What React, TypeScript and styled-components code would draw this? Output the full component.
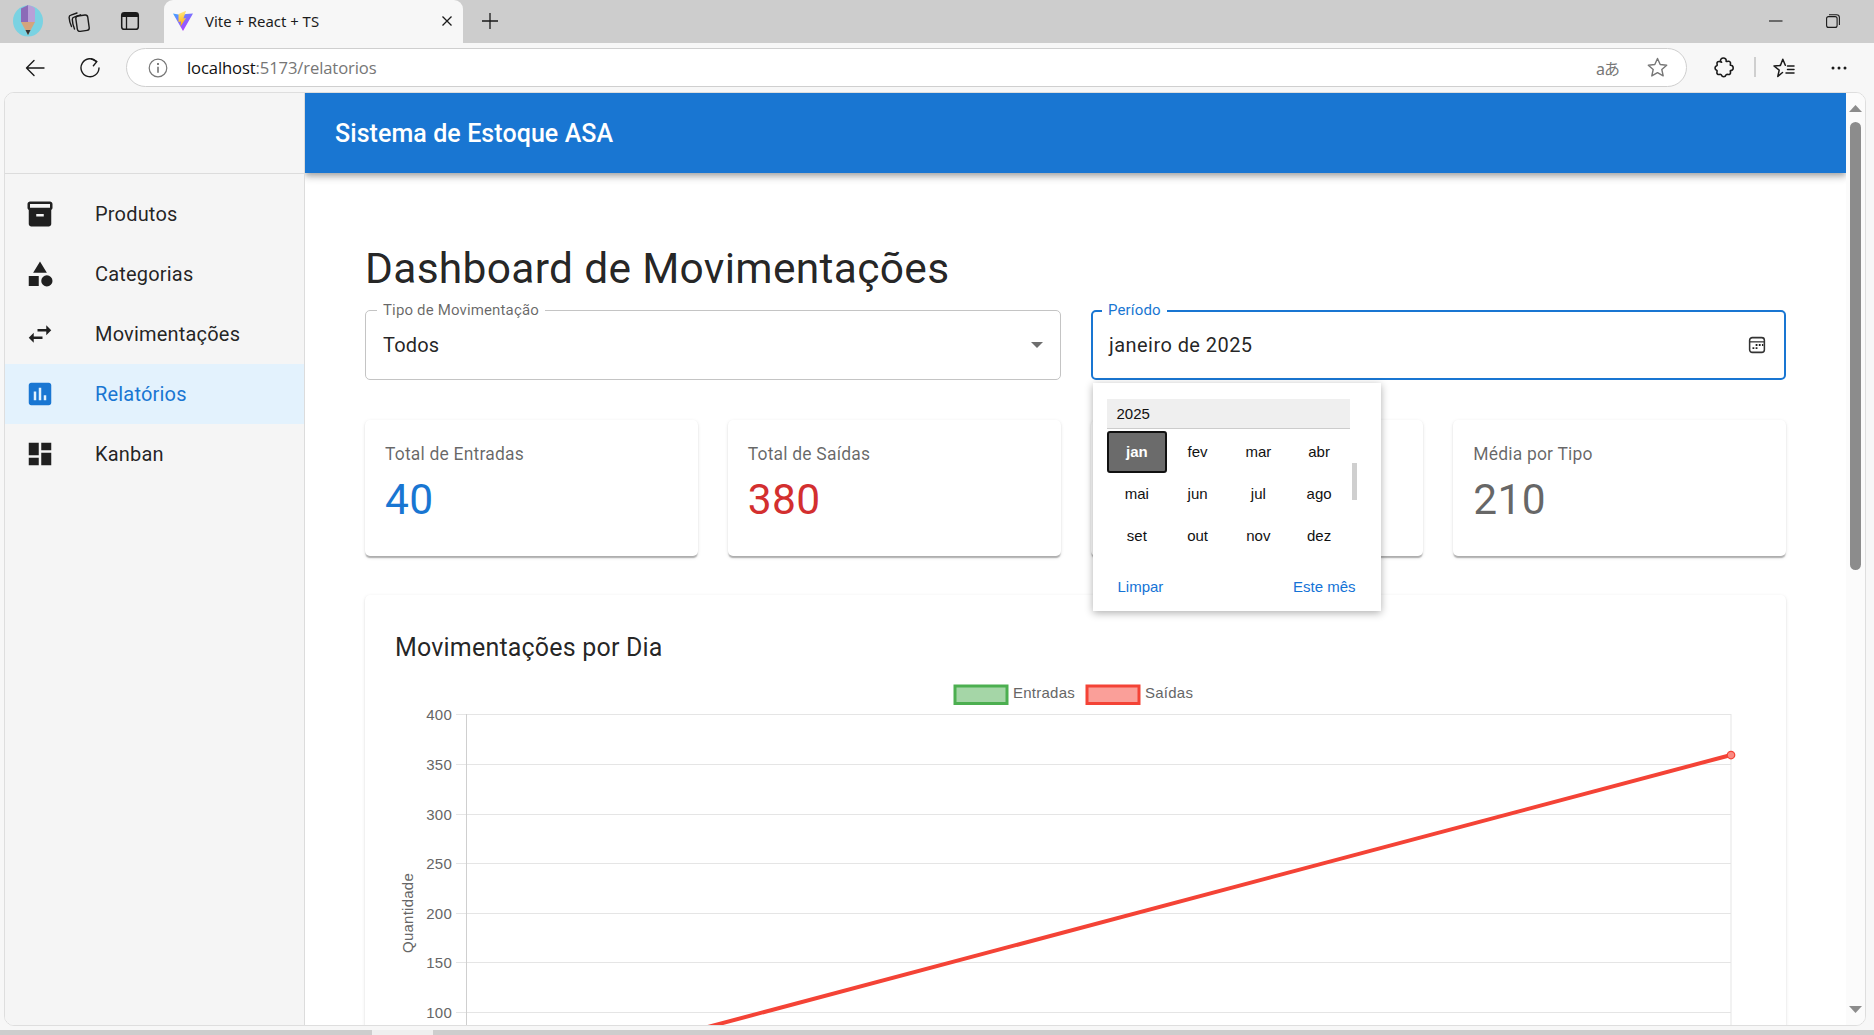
import React from "react";
import styled, { createGlobalStyle } from "styled-components";

const GlobalStyle = createGlobalStyle`
  html, body { margin: 0; padding: 0; width: 1874px; height: 1035px; overflow: hidden; background: #f7f7f7; }
  * { box-sizing: border-box; }
  #root { width: 1874px; height: 1035px; }
`;

const Page = styled.div`
  width: 1874px;
  height: 1035px;
  display: flex;
  flex-direction: column;
  background: #f7f7f7;
  overflow: hidden;
  font-family: Roboto, "Liberation Sans", sans-serif;
`;

/* ---------- browser chrome ---------- */
const TabStrip = styled.div`
  height: 43px;
  flex: none;
  background: #cdcdcd;
  display: flex;
  align-items: stretch;
  padding: 0 12px 0 3px;
`;
const StripSlot = styled.div<{ $w?: number }>`
  width: ${(p) => p.$w ?? 50}px;
  margin-right: 1px;
  padding-bottom: 2px;
  display: flex;
  align-items: center;
  justify-content: center;
  flex: none;
`;
const Tab = styled.div`
  width: 299px;
  margin-left: 8px;
  background: #f7f7f7;
  border-radius: 9px 9px 0 0;
  display: flex;
  align-items: center;
  padding: 0 10px 2px 9px;
  flex: none;
  position: relative;
`;
const TabTitle = styled.span`
  margin-left: 12px;
  flex: 1;
  font: 14.9px "Noto Sans", "Open Sans", sans-serif;
  color: #1c1c1c;
`;
const Spacer = styled.div`
  flex: 1;
`;
const ToolBar = styled.div`
  height: 49px;
  flex: none;
  display: flex;
  align-items: flex-start;
  padding: 5px 0 0 7px;
  background: #f7f7f7;
`;
const ToolSlot = styled.div<{ $w?: number }>`
  width: ${(p) => p.$w ?? 55}px;
  height: 39px;
  display: flex;
  align-items: center;
  justify-content: center;
  flex: none;
`;
const Address = styled.div`
  width: 1561px;
  height: 39px;
  margin: 0 10px 0 9px;
  flex: none;
  background: #fff;
  border: 1px solid #cfcfcf;
  border-radius: 20px;
  display: flex;
  align-items: center;
  padding: 0 18px 0 21px;
`;
const Url = styled.div`
  margin-left: 19px;
  flex: 1;
  font: 16.6px "Open Sans", "Noto Sans", sans-serif;
  letter-spacing: -0.11px;
  color: #767676;
`;
const UrlHost = styled.span`
  color: #111;
`;
const Translate = styled.span`
  margin-right: 28px;
  font: 16px "Noto Sans", "Noto Sans CJK JP", sans-serif;
  letter-spacing: -1px;
  color: #777;
`;
const ToolDivider = styled.div`
  width: 2px;
  height: 20px;
  margin: 9px 3px 0 3px;
  background: #cfcfcf;
  flex: none;
`;

/* ---------- app frame ---------- */
const Frame = styled.div`
  width: 1862px;
  height: 934px;
  margin-left: 4px;
  flex: none;
  display: flex;
  background: #fff;
  border: 1px solid #dedede;
  border-radius: 10px;
  overflow: hidden;
`;
const Sidebar = styled.aside`
  width: 300px;
  flex: none;
  background: #f5f5f5;
  border-right: 1px solid #dcdcdc;
`;
const SideTop = styled.div`
  height: 81px;
  border-bottom: 1px solid #dcdcdc;
`;
const NavList = styled.nav`
  padding-top: 10px;
  display: flex;
  flex-direction: column;
`;
const NavItem = styled.div<{ $active?: boolean }>`
  height: 60px;
  display: flex;
  align-items: center;
  padding-left: 20px;
  background: ${(p) => (p.$active ? "#e3f2fd" : "transparent")};
  color: ${(p) => (p.$active ? "#1976d2" : "rgba(0,0,0,0.87)")};
`;
const NavIcon = styled.svg`
  width: 30px;
  height: 30px;
  fill: currentColor;
  flex: none;
`;
const NavLabel = styled.span`
  margin-left: 40px;
  font-size: 20px;
  letter-spacing: 0.19px;
`;
const Main = styled.main`
  width: 1541px;
  flex: none;
  display: flex;
  flex-direction: column;
  overflow: hidden;
`;
const AppBar = styled.header`
  height: 80px;
  flex: none;
  background: #1976d2;
  display: flex;
  align-items: center;
  padding-left: 30px;
  color: #fff;
  font-size: 25px;
  font-weight: 500;
  letter-spacing: 0.08px;
  position: relative;
  z-index: 2;
  box-shadow: 0 2.5px 5px -1px rgba(0,0,0,.2), 0 5px 6px 0 rgba(0,0,0,.14), 0 1px 12px 0 rgba(0,0,0,.12);
`;
const Content = styled.div`
  flex: 1;
  padding: 70px 60px 0;
  overflow: hidden;
`;
const Title = styled.h1`
  margin: 0 0 14.5px;
  font-size: 42.5px;
  font-weight: 400;
  line-height: 1.235;
  letter-spacing: 0.31px;
  color: rgba(0,0,0,0.87);
`;
const Filters = styled.div`
  display: grid;
  grid-template-columns: 1fr 1fr;
  gap: 30px;
`;
const Field = styled.div<{ $focused?: boolean }>`
  position: relative;
  height: 70px;
  display: flex;
  align-items: center;
  justify-content: space-between;
  padding: 0 17px;
  border-radius: 5px;
  border: ${(p) => (p.$focused ? "2.5px solid #1976d2" : "1px solid #c4c4c4")};
  ${(p) => (p.$focused ? "padding: 0 15.5px;" : "")}
  font-size: 20px;
  letter-spacing: 0.19px;
  color: rgba(0,0,0,0.87);
`;
const FieldLabel = styled.span<{ $focused?: boolean }>`
  position: absolute;
  left: ${(p) => (p.$focused ? 9.5 : 11)}px;
  top: ${(p) => (p.$focused ? -10.5 : -10)}px;
  padding: 0 6px;
  background: #fff;
  font-size: 15px;
  line-height: 18px;
  letter-spacing: 0.15px;
  color: ${(p) => (p.$focused ? "#1976d2" : "rgba(0,0,0,0.6)")};
`;
const DateValue = styled.span`
  margin-left: 1px;
  letter-spacing: 0.44px;
`;
const DropArrow = styled.svg`
  width: 12px;
  height: 6px;
  fill: #6e6e6e;
`;
const CalendarIcon = styled.svg`
  width: 18px;
  height: 18px;
  margin-right: 3px;
`;
const Stats = styled.div`
  margin-top: 40px;
  display: grid;
  grid-template-columns: repeat(4, 1fr);
  gap: 30px;
`;
const cardShadow =
  "0 2.5px 1.25px -1.25px rgba(0,0,0,.16), 0 1.25px 1.25px 0 rgba(0,0,0,.12), 0 1.25px 3.75px 0 rgba(0,0,0,.1)";
const StatCard = styled.div`
  height: 136px;
  padding: 20px;
  background: #fff;
  border-radius: 5px;
  box-shadow: ${cardShadow};
`;
const StatLabel = styled.div`
  font-size: 17.5px;
  line-height: 29px;
  letter-spacing: 0.19px;
  color: rgba(0,0,0,0.6);
`;
const StatValue = styled.div<{ $color: string }>`
  margin-top: 5px;
  font-size: 42.5px;
  line-height: 1.235;
  letter-spacing: 0.31px;
  color: ${(p) => p.$color};
`;
const ChartCard = styled.section`
  margin-top: 39px;
  padding: 31px 30px 30px;
  height: 620px;
  background: #fff;
  border-radius: 5px;
  box-shadow: ${cardShadow};
`;
const ChartTitle = styled.h2`
  margin: 0;
  font-size: 25px;
  font-weight: 400;
  line-height: 43px;
  letter-spacing: 0.19px;
  color: rgba(0,0,0,0.87);
`;
const ChartSvg = styled.svg`
  display: block;
  font-family: "Liberation Sans", Arial, sans-serif;
  font-size: 15px;
  letter-spacing: 0.25px;
`;

/* ---------- month picker popup ---------- */
const Popup = styled.div`
  position: absolute;
  z-index: 5;
  left: 0;
  top: calc(100% + 5px);
  width: 288px;
  height: 228px;
  padding: 16px 14px 0;
  background: #fff;
  box-shadow: 0 2px 8px rgba(0,0,0,.32);
  font-family: "Liberation Sans", Arial, sans-serif;
  font-size: 15px;
  letter-spacing: 0;
  color: #111;
`;
const YearBar = styled.div`
  width: 243px;
  height: 30px;
  padding-left: 10px;
  display: flex;
  align-items: center;
  background: #efefef;
  border-bottom: 1px solid #ccc;
`;
const MonthGrid = styled.div`
  width: 243px;
  margin-top: 2px;
  display: grid;
  grid-template-columns: repeat(4, 1fr);
  grid-auto-rows: 42px;
`;
const Month = styled.div<{ $selected?: boolean }>`
  display: flex;
  align-items: center;
  justify-content: center;
  border-radius: 3px;
  ${(p) =>
    p.$selected
      ? "background:#6b6b6b;color:#fff;font-weight:700;border:2px solid #111;"
      : ""}
`;
const PopupFooter = styled.div`
  margin-top: 18px;
  height: 24px;
  display: flex;
  align-items: center;
  justify-content: space-between;
  padding: 0 11px;
  color: #1473d6;
`;
const PopupThumb = styled.div`
  position: absolute;
  left: 259px;
  top: 80px;
  width: 5px;
  height: 37px;
  background: #cfcfcf;
`;

/* ---------- scrollbars ---------- */
const VBar = styled.div`
  width: 19px;
  flex: none;
  background: #fbfbfb;
  display: flex;
  flex-direction: column;
  align-items: center;
  padding: 12px 0 12px 0;
`;
const VThumb = styled.div`
  width: 11px;
  height: 448px;
  margin-top: 10px;
  background: #8c8c8c;
  border-radius: 6px;
`;
const Arrow = styled.svg`
  width: 13px;
  height: 7px;
  fill: #8c8c8c;
  flex: none;
`;
const HBar = styled.div`
  height: 5px;
  margin-top: 4px;
  flex: none;
  display: flex;
  background: #cdcdcd;
`;
const HGap = styled.div`
  width: 61px;
  margin-left: 372px;
  background: #efefef;
`;

const navItems = [
  {
    label: "Produtos",
    d: "M20 2H4c-1 0-2 .9-2 2v3.01c0 .72.43 1.34 1 1.69V20c0 1.1 1.1 2 2 2h14c.9 0 2-.9 2-2V8.7c.57-.35 1-.97 1-1.69V4c0-1.1-1-2-2-2zm-5 12H9v-2h6v2zm5-7H4V4l16-.02V7z",
  },
  {
    label: "Categorias",
    d: "M12 2l-5.5 9h11zM17.5 13a4.5 4.5 0 1 0 0 9 4.5 4.5 0 0 0 0-9zM3 13.5h8v8H3z",
  },
  {
    label: "Movimentações",
    d: "M6.99 11L3 15l3.99 4v-3H14v-2H6.99v-3zM21 9l-3.99-4v3H10v2h7.01v3L21 9z",
  },
  {
    label: "Relatórios",
    active: true,
    d: "M19 3H5c-1.1 0-2 .9-2 2v14c0 1.1.9 2 2 2h14c1.1 0 2-.9 2-2V5c0-1.1-.9-2-2-2zM9 17H7v-7h2v7zm4 0h-2V7h2v10zm4 0h-2v-4h2v4z",
  },
  {
    label: "Kanban",
    d: "M3 13h8V3H3v10zm0 8h8v-6H3v6zm10 0h8V11h-8v10zm0-18v6h8V3h-8z",
  },
];

const months = ["jan", "fev", "mar", "abr", "mai", "jun", "jul", "ago", "set", "out", "nov", "dez"];
const ticks = [
  { v: 400, y: 714 },
  { v: 350, y: 764 },
  { v: 300, y: 814 },
  { v: 250, y: 863 },
  { v: 200, y: 913 },
  { v: 150, y: 962 },
  { v: 100, y: 1012 },
];

const stroke = { fill: "none", stroke: "#1a1a1a", strokeWidth: 1.4, strokeLinecap: "round", strokeLinejoin: "round" } as const;

const ProfileIcon = () => (
  <svg width="30" height="32" viewBox="0 0 30 32">
    <ellipse cx="15" cy="16" rx="15" ry="15.5" fill="#7ad2e2" />
    <path d="M8 3.5Q15 0 15 0V17H8z" fill="#8b6bb8" />
    <path d="M15 0Q22 2 22 4V17H15z" fill="#b8a0d8" />
    <path d="M8 17H22L15 30z" fill="#d3a47c" />
    <path d="M12.5 25h5L15 30z" fill="#333" />
  </svg>
);
const CollectionsIcon = () => (
  <svg width="22" height="22" viewBox="0 0 22 22" {...stroke}>
    <rect x="8.5" y="5.5" width="12" height="15.5" rx="2.5" transform="rotate(-8 14 13)" />
    <path d="M3.5 16.5C2 13 1.2 9.5 1.1 7.5c0-1 .8-2 1.8-2.3L9 3" />
    <path d="M6.5 19C5 15 4.3 11.5 4.3 9.5c0-1 .8-2 1.8-2.3L12.5 4.8" />
  </svg>
);
const PanelIcon = () => (
  <svg width="20" height="20" viewBox="0 0 20 20">
    <rect x="1.7" y="1.7" width="16.6" height="16.6" rx="2.6" fill="none" stroke="#1a1a1a" strokeWidth="1.5" />
    <path d="M2 2h16v4H2z" fill="#1a1a1a" />
    <path d="M6.5 6v12" stroke="#1a1a1a" strokeWidth="1.3" />
  </svg>
);
const ViteIcon = () => (
  <svg width="20" height="20" viewBox="0 0 20 20">
    <defs>
      <linearGradient id="viteA" x1="0" y1="0" x2="0.7" y2="1">
        <stop offset="0" stopColor="#41a6ff" />
        <stop offset="1" stopColor="#bd34fe" />
      </linearGradient>
      <linearGradient id="viteB" x1="0.4" y1="0" x2="0.5" y2="1">
        <stop offset="0" stopColor="#ffea83" />
        <stop offset="1" stopColor="#ffa800" />
      </linearGradient>
    </defs>
    <path d="M0 2.5L8 4 13 3l7-.5L10 20z" fill="url(#viteA)" />
    <path d="M12.5 0L5.5 3v8l2.5-.6-.5 5 5.5-8.4-2.6.5 2.6-7.5z" fill="url(#viteB)" />
  </svg>
);
const CloseIcon = () => (
  <svg width="12" height="12" viewBox="0 0 12 12" fill="none" stroke="#1a1a1a" strokeWidth="1.3">
    <path d="M1.5 1.5l9 9M10.5 1.5l-9 9" />
  </svg>
);
const PlusIcon = () => (
  <svg width="18" height="18" viewBox="0 0 18 18" fill="none" stroke="#1a1a1a" strokeWidth="1.3">
    <path d="M9 1v16M1 9h16" />
  </svg>
);
const MinIcon = () => (
  <svg width="14" height="2" viewBox="0 0 14 2">
    <path d="M0 1h13.5" stroke="#1a1a1a" strokeWidth="1.1" />
  </svg>
);
const RestoreIcon = () => (
  <svg width="14" height="14" viewBox="0 0 14 14" fill="none" stroke="#1a1a1a" strokeWidth="1.1">
    <rect x="0.6" y="2.6" width="10.5" height="10.8" rx="2" />
    <path d="M3 .7h7.5c1.6 0 2.9 1.2 2.9 2.8V11" />
  </svg>
);
const BackIcon = () => (
  <svg width="20" height="20" viewBox="0 0 20 20" {...stroke}>
    <path d="M19 10H1.5M9 2.5L1.5 10 9 17.5" />
  </svg>
);
const RefreshIcon = () => (
  <svg width="20" height="20" viewBox="0 0 20 20" {...stroke}>
    <path d="M16.5 3.5A9 9 0 1 0 19 10" />
    <path d="M11.5 .8l5.3 2.8-3.4 4.2" />
  </svg>
);
const InfoIcon = () => (
  <svg width="20" height="20" viewBox="0 0 20 20" fill="none">
    <circle cx="10" cy="10" r="8.8" stroke="#777" strokeWidth="1.2" />
    <path d="M10 8.8v6" stroke="#555" strokeWidth="1.3" />
    <circle cx="10" cy="5.9" r="1" fill="#555" />
  </svg>
);
const StarIcon = () => (
  <svg width="21" height="21" viewBox="0 0 21 21" fill="none" stroke="#777" strokeWidth="1.4" strokeLinejoin="round">
    <path d="M10.5 1.5l2.7 6 6.5.7-4.9 4.3 1.4 6.4-5.7-3.3-5.7 3.3 1.4-6.4L1.3 8.2l6.5-.7z" />
  </svg>
);
const ExtensionIcon = () => (
  <svg width="20" height="21" viewBox="0 0 20 21" {...stroke} strokeWidth={1.6}>
    <path d="M6.6 4.2C6 2.4 7.6 1 9.3 1c1.8 0 3.4 1.4 2.8 3.2.5.3 1.1.3 2 .1 1.4-.3 2.6.7 2.4 2.2-.1.7-.3 1.3-.1 1.8 1.6-.3 2.8 1 2.8 2.6s-1.2 2.9-2.8 2.6c-.2.5 0 1.1.1 1.8.2 1.5-1 2.5-2.4 2.2-.8-.2-1.3-.2-1.8.1-.4 1.2-1.4 2.2-2.6 2.2s-2.2-1-2.6-2.2c-.5-.3-1-.3-1.8-.1-1.4.3-2.6-.7-2.4-2.2.1-.7.3-1.3.1-1.8C2.1 13.2 1 12.2 1 11c0-1.2 1.1-2.2 2.1-2.5.2-.5 0-1.100-.1-1.8-.2-1.500 1-2.500 2.400-2.200.9.200 1.600.200 2.200.700z" />
  </svg>
);
const FavoritesIcon = () => (
  <svg width="22" height="20" viewBox="0 0 22 20" {...stroke} strokeWidth={1.5}>
    <path d="M9.500 14.500l-4.700 4 1.400-6.300L1 8l6.400-.6L9.800 1.300l2.500 6" />
    <path d="M14.500 8H21M14.500 11.500H21M13 15H21" />
  </svg>
);
const MoreIcon = () => (
  <svg width="16" height="4" viewBox="0 0 16 4" fill="#1a1a1a">
    <circle cx="2" cy="2" r="1.5" />
    <circle cx="8" cy="2" r="1.5" />
    <circle cx="14" cy="2" r="1.5" />
  </svg>
);

const Chart = () => (
  <ChartSvg width="1361" height="357" viewBox="395 669 1361 357">
    <rect x="955" y="686" width="52" height="17.5" fill="#a5d6a7" stroke="#4caf50" strokeWidth="3" />
    <text x="1013" y="698" fill="#666">Entradas</text>
    <rect x="1087" y="686" width="52" height="17.5" fill="#fa9f99" stroke="#f44336" strokeWidth="3" />
    <text x="1145" y="698" fill="#666">Saídas</text>
    {ticks.map((t) => (
      <g key={t.v}>
        <line x1="456" x2="1731" y1={t.y + 0.5} y2={t.y + 0.5} stroke="#e5e5e5" strokeWidth="1" />
        <text x="452" y={t.y + 5.5} textAnchor="end" fill="#666">
          {t.v}
        </text>
      </g>
    ))}
    <line x1="466.500" x2="466.500" y1="714" y2="1026" stroke="#cfcfcf" />
    <line x1="1731" x2="1731" y1="714" y2="1026" stroke="#e5e5e5" />
    <text transform="translate(413 913) rotate(-90)" textAnchor="middle" fill="#666">
      Quantidade
    </text>
    <line x1="467" y1="1091" x2="1731" y2="755" stroke="#f44336" strokeWidth="4" />
    <circle cx="1731" cy="755" r="3.750" fill="#fa8a82" stroke="#f44336" strokeWidth="1.250" />
  </ChartSvg>
);

export default function App() {
  return (
    <Page>
      <GlobalStyle />
      <TabStrip>
        <StripSlot><ProfileIcon /></StripSlot>
        <StripSlot><CollectionsIcon /></StripSlot>
        <StripSlot><PanelIcon /></StripSlot>
        <Tab>
          <ViteIcon />
          <TabTitle>Vite + React + TS</TabTitle>
          <CloseIcon />
        </Tab>
        <StripSlot $w={54}><PlusIcon /></StripSlot>
        <Spacer />
        <StripSlot $w={56}><MinIcon /></StripSlot>
        <StripSlot $w={56}><RestoreIcon /></StripSlot>
      </TabStrip>
      <ToolBar>
        <ToolSlot><BackIcon /></ToolSlot>
        <ToolSlot><RefreshIcon /></ToolSlot>
        <Address>
          <InfoIcon />
          <Url><UrlHost>localhost</UrlHost>:5173/relatorios</Url>
          <Translate>aあ</Translate>
          <StarIcon />
        </Address>
        <ToolSlot $w={54}><ExtensionIcon /></ToolSlot>
        <ToolDivider />
        <ToolSlot $w={50}><FavoritesIcon /></ToolSlot>
        <ToolSlot $w={5} />
        <ToolSlot $w={50}><MoreIcon /></ToolSlot>
      </ToolBar>
      <Frame>
        <Sidebar>
          <SideTop />
          <NavList>
            {navItems.map((n) => (
              <NavItem key={n.label} $active={n.active}>
                <NavIcon viewBox="0 0 24 24"><path d={n.d} /></NavIcon>
                <NavLabel>{n.label}</NavLabel>
              </NavItem>
            ))}
          </NavList>
        </Sidebar>
        <Main>
          <AppBar>Sistema de Estoque ASA</AppBar>
          <Content>
            <Title>Dashboard de Movimentações</Title>
            <Filters>
              <Field>
                <FieldLabel>Tipo de Movimentação</FieldLabel>
                Todos
                <DropArrow viewBox="0 0 12 6"><path d="M0 0h12L6 6z" /></DropArrow>
              </Field>
              <Field $focused>
                <FieldLabel $focused>Período</FieldLabel>
                <DateValue>janeiro de 2025</DateValue>
                <CalendarIcon viewBox="0 0 20 20">
                  <rect x="1.800" y="1.800" width="16.400" height="16.400" rx="3" fill="none" stroke="#333" strokeWidth="1.700" />
                  <path d="M2 6.500h16" stroke="#333" strokeWidth="1.400" />
                  <path d="M8.500 9h2v2h-2zM12 9h2v2h-2zM15.500 9h1.500v2h-1.500zM5 12.500h2v2H5zM8.500 12.500h2v2h-2z" fill="#222" />
                </CalendarIcon>
                <Popup>
                  <YearBar>2025</YearBar>
                  <MonthGrid>
                    {months.map((m) => (
                      <Month key={m} $selected={m === "jan"}>{m}</Month>
                    ))}
                  </MonthGrid>
                  <PopupFooter>
                    <span>Limpar</span>
                    <span>Este mês</span>
                  </PopupFooter>
                  <PopupThumb />
                </Popup>
              </Field>
            </Filters>
            <Stats>
              <StatCard>
                <StatLabel>Total de Entradas</StatLabel>
                <StatValue $color="#1976d2">40</StatValue>
              </StatCard>
              <StatCard>
                <StatLabel>Total de Saídas</StatLabel>
                <StatValue $color="#d32f2f">380</StatValue>
              </StatCard>
              <StatCard />
              <StatCard>
                <StatLabel>Média por Tipo</StatLabel>
                <StatValue $color="rgba(0,0,0,0.6)">210</StatValue>
              </StatCard>
            </Stats>
            <ChartCard>
              <ChartTitle>Movimentações por Dia</ChartTitle>
              <Chart />
            </ChartCard>
          </Content>
        </Main>
        <VBar>
          <Arrow viewBox="0 0 13 7"><path d="M6.500 0L13 7H0z" /></Arrow>
          <VThumb />
          <Spacer />
          <Arrow viewBox="0 0 13 7"><path d="M0 0h13L6.500 7z" /></Arrow>
        </VBar>
      </Frame>
      <HBar><HGap /></HBar>
    </Page>
  );
}
